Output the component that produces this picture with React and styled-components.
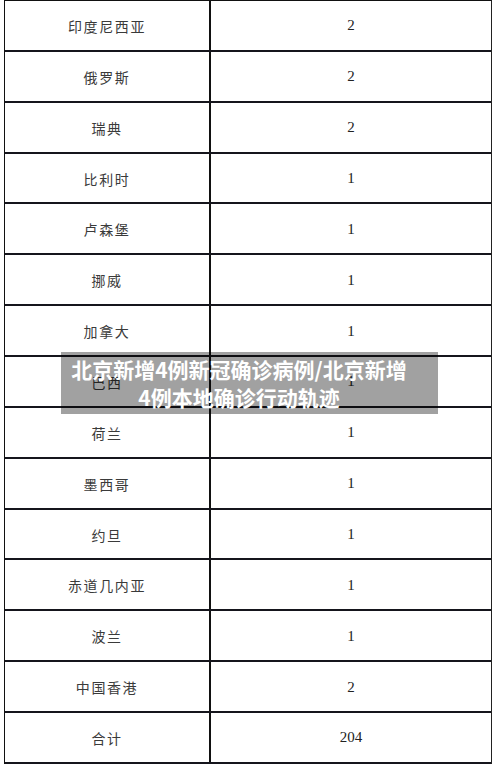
import React from 'react';
import styled, { createGlobalStyle } from 'styled-components';

const GlobalStyle = createGlobalStyle`
  html, body {
    margin: 0;
    padding: 0;
    background: #ffffff;
  }
`;

const Page = styled.div`
  position: relative;
  width: 500px;
  height: 768px;
  overflow: hidden;
  background: #ffffff;
`;

const Sheet = styled.div`
  margin-left: 4px;
  width: 488px;
  box-sizing: border-box;
  border-top: 1px solid #111;
  border-left: 1px solid #111;
  border-right: 1px solid #222;
  display: flex;
  flex-direction: column;
`;

const Row = styled.div`
  display: grid;
  grid-template-columns: 204px 2px 1fr;
  height: 50.87px;
  box-sizing: border-box;
  border-bottom: 2px solid #15151c;
`;

const Divider = styled.div`
  background: #111;
`;

const NameCell = styled.div`
  display: flex;
  align-items: center;
  justify-content: center;
  font-family: "Noto Sans CJK SC", "Noto Sans", sans-serif;
  font-size: 14px;
  letter-spacing: 1.6px;
  color: #3a3a3a;
  padding-top: 1px;
`;

const CountCell = styled.div`
  display: flex;
  align-items: center;
  justify-content: center;
  font-family: "Liberation Serif", "DejaVu Serif", serif;
  font-size: 15px;
  color: #222;
  padding-top: 1px;
`;

const Caption = styled.div`
  position: absolute;
  left: 61px;
  top: 352px;
  width: 377px;
  height: 62px;
  box-sizing: border-box;
  padding: 3px 29px 3px 8px;
  background: rgba(0, 0, 0, 0.37);
  color: #ffffff;
  font-family: "Noto Sans CJK SC", "Noto Sans", sans-serif;
  font-weight: 700;
  font-size: 21px;
  line-height: 28px;
  text-align: center;
  white-space: nowrap;
`;

const rows = [
  ['印度尼西亚', '2'],
  ['俄罗斯', '2'],
  ['瑞典', '2'],
  ['比利时', '1'],
  ['卢森堡', '1'],
  ['挪威', '1'],
  ['加拿大', '1'],
  ['巴西', '1'],
  ['荷兰', '1'],
  ['墨西哥', '1'],
  ['约旦', '1'],
  ['赤道几内亚', '1'],
  ['波兰', '1'],
  ['中国香港', '2'],
  ['合计', '204'],
];

export default function App() {
  return (
    <Page>
      <GlobalStyle />
      <Sheet>
        {rows.map(([name, count]) => (
          <Row key={name}>
            <NameCell>{name}</NameCell>
            <Divider />
            <CountCell>{count}</CountCell>
          </Row>
        ))}
      </Sheet>
      <Caption>
        北京新增4例新冠确诊病例/北京新增
        <br />
        4例本地确诊行动轨迹
      </Caption>
    </Page>
  );
}
